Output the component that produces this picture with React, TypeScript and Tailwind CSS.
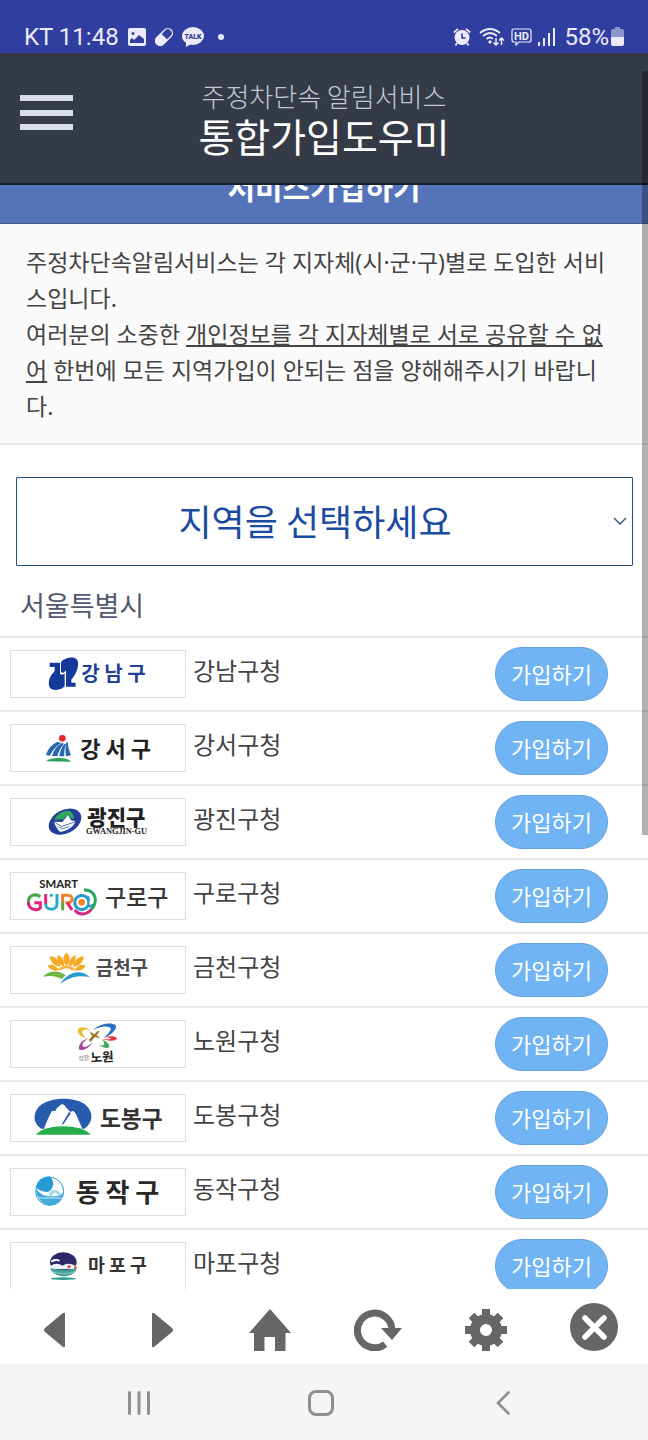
import type { ReactNode } from "react";

type District = { id: string; name: string; view: string; logo: ReactNode };

const districts: District[] = [
  {
    id: "gangnam",
    name: "강남구청",
    view: "33 33 522 138",
    logo: (
      <>
        <g transform="translate(60 15)" fill="#14399a">
          <path d="M89 53H120V86C124 91 131 89 134 85V124C125 134 108 138 94 132C83 125 85 103 94 90L104 78V66H89Z" />
          <path d="M123 51C134 38 160 33 170 43C180 56 172 84 154 104V113H167V125H138V76L131 83L123 82Z" />
        </g>
        <text x="244" y="124" fontSize="60" fontWeight="700" fill="#24419a">강 남 구</text>
      </>
    ),
  },
  {
    id: "gangseo",
    name: "강서구청",
    view: "33 255 522 138",
    logo: (
      <>
        <circle cx="187" cy="295" r="10" fill="#e8222c" />
        <path d="M172 306L184 308C168 318 156 332 150 347L138 345C143 328 155 313 172 306Z" fill="#2766b0" />
        <path d="M186 309L192 311C181 323 175 336 172 349L156 348C161 331 171 317 186 309Z" fill="#2766b0" />
        <path d="M194 311L198 312C193 325 192 337 193 349H178C180 334 184 321 194 311Z" fill="#2766b0" />
        <path d="M199 307L203 306C204 320 208 334 213 346L198 349C195 335 196 321 199 307Z" fill="#2766b0" />
        <path d="M138 364C152 352 199 350 213 365Z" fill="#25a45a" />
        <text x="241" y="351" fontSize="66" fontWeight="700" fill="#222">강 서 구</text>
      </>
    ),
  },
  {
    id: "gwangjin",
    name: "광진구청",
    view: "33 479 522 138",
    logo: (
      <>
        <ellipse cx="195" cy="547" rx="52" ry="35" transform="rotate(-28 195 547)" fill="#233f99" />
        <path d="M163 541C172 522 188 515 206 514C216 517 222 526 222 540L212 536L204 524L190 540Z" fill="#31a957" />
        <path d="M162 547L187 548L204 526L213 543L227 546L186 560Z" fill="#fff" />
        <path d="M162 549L186 562L226 548C219 564 202 575 180 578C172 570 165 559 162 549Z" fill="#eef7f5" />
        <path d="M176 563L188 568L208 562" fill="none" stroke="#233f99" strokeWidth="2" />
        <text x="262" y="556" fontSize="63" fontWeight="900" fill="#222">광진구</text>
        <text x="258" y="583" fontSize="25" fontWeight="700" fill="#222" className="font-['Liberation_Serif',serif]">GWANGJIN-GU</text>
      </>
    ),
  },
  {
    id: "guro",
    name: "구로구청",
    view: "33 40 522 138",
    logo: (
      <>
        <text x="118" y="86" fontSize="34" fontWeight="700" fill="#222" className="font-[Lato,sans-serif]">SMART</text>
        <g fill="none" strokeWidth="9">
          <path d="M121 111C106 100 85 107 85 127" stroke="#48a646" />
          <path d="M85 126C85 151 111 155 121 145V129H103" stroke="#df2277" />
          <path d="M137 103V134" stroke="#e4267c" />
          <path d="M137 132C137 154 171 154 171 132V103" stroke="#2babc8" />
          <path d="M188 128V107H203C221 107 221 129 203 129H196" stroke="#ed8128" />
          <path d="M202 129L216 151" stroke="#df2277" />
          <path d="M188 126V152" stroke="#5ba947" />
          <path d="M265 136A21 21 0 1 1 266 124" stroke="#2999d2" />
          <path d="M265 110V132C265 142 276 143 278 133" stroke="#2999d2" strokeWidth="7" />
          <path d="M252 91C279 89 292 113 283 136C280 143 277 148 271 152" stroke="#2ba45c" />
          <path d="M273 150C260 167 237 167 224 151" stroke="#d62785" />
        </g>
        <circle cx="245" cy="128" r="10" fill="#ef851f" />
        <circle cx="154" cy="107" r="5" fill="#2babc8" />
        <text x="315" y="140" fontSize="69" fontWeight="500" fill="#373737">구로구</text>
      </>
    ),
  },
  {
    id: "geumcheon",
    name: "금천구청",
    view: "33 264 522 138",
    logo: (
      <>
        <g fill="#f6a823">
          <path d="M143 319C154 314 171 319 176 334C158 337 147 330 143 319Z" />
          <path d="M149 292C168 292 180 307 181 323C163 323 151 309 149 292Z" />
          <path d="M173 288C186 292 195 308 192 323C178 317 169 304 173 288Z" />
          <path d="M199 281C212 291 213 308 200 322C187 308 187 292 199 281Z" />
          <path d="M226 288C230 304 222 317 208 323C205 308 213 294 226 288Z" />
          <path d="M251 292C250 311 236 323 219 323C221 306 233 293 251 292Z" />
          <path d="M257 319C253 332 241 337 224 334C229 320 244 314 257 319Z" />
        </g>
        <path d="M174 332C184 317 216 316 226 333L215 334C205 326 194 326 184 334Z" fill="#f9b13a" />
        <path d="M129 354C145 333 180 333 197 349L185 360C168 350 149 349 129 354Z" fill="#73b641" />
        <path d="M180 376C198 343 240 325 270 355C240 348 208 353 180 376Z" fill="#2b99ce" />
        <text x="287" y="347" fontSize="57" fontWeight="700" fill="#4b4b50">금천구</text>
      </>
    ),
  },
  {
    id: "nowon",
    name: "노원구청",
    view: "33 486 522 138",
    logo: (
      <>
        <path d="M279 513C294 496 332 487 347 498C352 511 336 527 312 536C331 518 339 508 326 504C312 500 297 504 279 513Z" fill="#2773bb" />
        <path d="M273 514C256 502 238 503 234 512C231 524 243 533 259 537C246 526 243 517 250 513C257 510 266 511 273 514Z" fill="#f1b82b" />
        <path d="M265 538C242 545 232 563 239 573C251 575 267 566 278 551C260 563 251 567 248 561C245 555 254 546 265 538Z" fill="#a6429b" />
        <path d="M290 553C306 564 321 571 327 565C330 556 321 548 305 541C313 550 316 555 309 559C304 561 297 557 290 553Z" fill="#42aa5b" />
        <path d="M311 535C327 530 345 530 351 537C349 547 330 548 305 539C324 543 337 540 330 537C325 534 318 535 311 535Z" fill="#e7363b" />
        <path d="M269 517L283 526L293 516L299 517L290 529L302 538L285 534L272 548L266 543L276 532Z" fill="#a17730" />
        <text x="236" y="606" fontSize="18" fill="#666" transform="rotate(-8 236 606)">강한</text>
        <text x="272" y="610" fontSize="38" fontWeight="700" fill="#222" transform="rotate(-3 272 610)">노원</text>
      </>
    ),
  },
  {
    id: "dobong",
    name: "도봉구청",
    view: "33 46 522 138",
    logo: (
      <>
        <path d="M124 147C98 133 98 100 118 80C147 51 229 49 258 77C281 99 280 129 253 147Z" fill="#285bac" />
        <path d="M132 147C138 131 146 112 154 97C158 90 163 96 166 94C170 84 176 82 181 77C186 70 194 75 199 84L212 98C218 90 223 96 228 104L247 147Z" fill="#fff" />
        <path d="M207 97L184 136L191 132L213 100Z" fill="#285bac" />
        <path d="M108 165C132 132 244 130 272 165Z" fill="#25ad4b" />
        <text x="300" y="143" fontSize="68" fontWeight="700" fill="#333">도봉구</text>
      </>
    ),
  },
  {
    id: "dongjak",
    name: "동작구청",
    view: "33 270 522 138",
    logo: (
      <>
        <circle cx="149" cy="337" r="42" fill="#fff" stroke="#279bd4" strokeWidth="3" />
        <path d="M108 326C111 304 128 293 149 292C165 308 163 328 144 339C130 339 118 334 108 326Z" fill="#279bd4" />
        <path d="M107 328C120 345 133 352 151 352C173 353 184 348 191 340C186 394 112 394 107 328Z" fill="#42aadb" />
        <path d="M146 350C149 329 175 325 184 348L175 350C168 337 158 339 155 351Z" fill="#a8d9eb" />
        <path d="M112 357H186" stroke="#c5e6f3" strokeWidth="3" />
        <text x="227" y="370" fontSize="78" fontWeight="700" fill="#282828">동 작 구</text>
      </>
    ),
  },
  {
    id: "mapo",
    name: "마포구청",
    view: "33 492 522 138",
    logo: (
      <>
        <ellipse cx="190" cy="550" rx="40" ry="30" fill="#2d2869" />
        <path d="M151 562C164 550 177 554 188 560C202 549 218 555 229 562V570H151Z" fill="#e9f2f5" />
        <path d="M151 567C168 573 212 574 230 567C226 600 158 600 151 567Z" fill="#459f99" />
        <path d="M154 577C175 586 207 586 227 577" fill="none" stroke="#8bcac1" strokeWidth="3" />
        <path d="M153 546C160 549 166 536 178 546" fill="none" stroke="#fff" strokeWidth="5" />
        <circle cx="162" cy="544" r="4" fill="#fff" />
        <circle cx="207" cy="563" r="5" fill="#ed4546" />
        <circle cx="226" cy="566" r="4" fill="#ed4546" />
        <ellipse cx="190" cy="599" rx="38" ry="4" fill="#2b9c91" />
        <text x="264" y="580" fontSize="55" fontWeight="700" fill="#333">마 포 구</text>
      </>
    ),
  },
];

function StatusBar() {
  return (
    <div className="flex h-[53px] shrink-0 items-center bg-[#303e9f] pt-5 pr-6 pl-6 font-[Roboto,sans-serif] text-[24px] leading-8 text-[#ebebfb]">
      <span>KT 11:48</span>
      <svg className="ml-[9px] size-[18px]" viewBox="0 0 18 18" aria-hidden="true">
        <path
          fillRule="evenodd"
          fill="currentColor"
          d="M2 0H16Q18 0 18 2V16Q18 18 16 18H2Q0 18 0 16V2Q0 0 2 0ZM2 14V15H16V11L11 7L6 12L4 10L2 12ZM5 4A1.5 1.5 0 1 0 5 7A1.5 1.5 0 1 0 5 4Z"
        />
      </svg>
      <svg className="ml-2 h-5 w-5" viewBox="0 0 20 20" aria-hidden="true">
        <g transform="rotate(45 10 10)">
          <rect x="5.5" y="0" width="9" height="20" rx="4.5" fill="none" stroke="currentColor" strokeWidth="1.4" />
          <path d="M5.5 10H14.500V15.500A4.500 4.500 0 0 1 5.500 15.500Z" fill="currentColor" stroke="currentColor" />
        </g>
      </svg>
      <svg className="ml-2 h-5 w-[22px]" viewBox="0 0 22 20" aria-hidden="true">
        <ellipse cx="11" cy="9" rx="11" ry="9" fill="currentColor" />
        <path d="M4 14V20L11 16Z" fill="currentColor" />
        <text x="11" y="11.500" textAnchor="middle" fontSize="7" fontWeight="900" fill="#303e9f">TALK</text>
      </svg>
      <span className="ml-[14px] size-[6px] rounded-full bg-current" />
      <span className="flex-1" />
      <svg className="h-[18px] w-[18px]" viewBox="0 0 18 18" fill="none" stroke="currentColor" aria-hidden="true">
        <circle cx="9" cy="9.500" r="7.500" fill="currentColor" stroke="none" />
        <path d="M.8 4.500L5 .9M17.200 4.500L13 .9M4 15L2.500 17.500M14 15L15.500 17.500" strokeWidth="1.800" />
        <path d="M9 5.500V10H12.500" stroke="#303e9f" strokeWidth="1.600" />
      </svg>
      <svg className="ml-2 h-5 w-[26px]" viewBox="0 0 26 20" fill="none" stroke="currentColor" strokeWidth="1.700" aria-hidden="true">
        <path d="M1 6Q11 -2 21 6M4 9Q11 3 18 9M7.500 12Q11 9 14 12" />
        <path d="M11 13L13 15L11 17L9 15Z" fill="currentColor" stroke="none" />
        <path d="M17 11V18M14.500 15.500L17 18L19.500 15.500M22.500 18V11M20 13.500L22.500 11L25 13.500" strokeWidth="1.500" />
      </svg>
      <svg className="ml-[6px] h-[18px] w-[21px]" viewBox="0 0 21 18" aria-hidden="true">
        <path d="M3 1H18Q20 1 20 3V12Q20 14 18 14H8L5 17V14H3Q1 14 1 12V3Q1 1 3 1Z" fill="none" stroke="currentColor" strokeWidth="1.200" />
        <text x="10.500" y="11.500" textAnchor="middle" fontSize="11" fontWeight="700" fill="currentColor">HD</text>
      </svg>
      <svg className="ml-[6px] h-[18px] w-[17px]" viewBox="0 0 17 18" fill="currentColor" aria-hidden="true">
        <path d="M0 14H2V18H0ZM5 10H7V18H5ZM10 5H12V18H10ZM15 0H17V18H15Z" />
      </svg>
      <span className="ml-[9px]">58%</span>
      <svg className="ml-[2px] h-[19px] w-[13px]" viewBox="0 0 13 19" fill="currentColor" aria-hidden="true">
        <path d="M4 0H9V2H11Q13 2 13 4V10H0V4Q0 2 2 2H4Z" opacity=".5" />
        <path d="M0 10H13V17Q13 19 11 19H2Q0 19 0 17Z" />
      </svg>
    </div>
  );
}

function Toolbar() {
  const button = "flex h-full w-full items-center justify-center text-[#666]";
  return (
    <nav aria-label="브라우저 도구" className="grid h-[75px] shrink-0 grid-cols-6 bg-white pt-[6px]">
      <button aria-label="이전" className={button}>
        <svg className="h-9 w-[21px]" viewBox="0 0 21 36" fill="currentColor"><path d="M21 2V34Q21 36 19 35L1 20Q-1 18 1 16L19 1Q21 0 21 2Z" /></svg>
      </button>
      <button aria-label="다음" className={button}>
        <svg className="h-9 w-[21px]" viewBox="0 0 21 36" fill="currentColor"><path d="M0 2V34Q0 36 2 35L20 20Q22 18 20 16L2 1Q0 0 0 2Z" /></svg>
      </button>
      <button aria-label="홈" className={button}>
        <svg className="h-[42px] w-[42px]" viewBox="0 0 42 42" fill="currentColor"><path d="M21 0L42 24H36.500V42H26V28H15.500V42H5V24H0Z" /></svg>
      </button>
      <button aria-label="새로고침" className={button}>
        <svg className="h-[42px] w-12" viewBox="0 0 48 42">
          <path d="M31.200 35.200A17.300 17.300 0 1 1 38 21" fill="none" stroke="currentColor" strokeWidth="7" />
          <path d="M27 19H48L38 31Z" fill="currentColor" />
        </svg>
      </button>
      <button aria-label="설정" className={button}>
        <svg className="h-[42px] w-[42px]" viewBox="0 0 42 42">
          <circle cx="21" cy="21" r="11" fill="none" stroke="currentColor" strokeWidth="10" />
          <g stroke="currentColor" strokeWidth="8">
            <path d="M21 0V9M21 33V42M0 21H9M33 21H42M6.500 6.500L13 13M29 29L35.500 35.500M35.500 6.500L29 13M13 29L6.500 35.500" />
          </g>
        </svg>
      </button>
      <button aria-label="닫기" className={button}>
        <svg className="mb-[6px] h-12 w-12" viewBox="0 0 48 48">
          <circle cx="24" cy="24" r="24" fill="currentColor" />
          <path d="M15 15L34 34M34 15L15 34" stroke="#fff" strokeWidth="5.500" strokeLinecap="round" />
        </svg>
      </button>
    </nav>
  );
}

function SystemNavigation() {
  const button = "flex h-full w-full items-center justify-center text-[#8f8f8f]";
  return (
    <nav aria-label="시스템 탐색" className="grid h-[76px] shrink-0 grid-cols-3 bg-[#f5f5f5] pt-[2px] pr-[54px] pl-12">
      <button aria-label="최근 앱" className={button}>
        <svg className="h-6 w-6" viewBox="0 0 24 24" stroke="currentColor" strokeWidth="3" strokeLinecap="round"><path d="M2.500 1.500V22.500M12 1.500V22.500M21.500 1.500V22.500" /></svg>
      </button>
      <button aria-label="홈 화면" className={button}>
        <svg className="h-[26px] w-[26px]" viewBox="0 0 26 26"><rect x="1.500" y="1.500" width="23" height="23" rx="6.500" fill="none" stroke="currentColor" strokeWidth="3" /></svg>
      </button>
      <button aria-label="뒤로" className={button}>
        <svg className="h-6 w-[14px]" viewBox="0 0 14 24"><path d="M12.500 1.500L2 12L12.500 22.500" fill="none" stroke="currentColor" strokeWidth="2.600" strokeLinecap="round" /></svg>
      </button>
    </nav>
  );
}

export default function App() {
  return (
    <div className="relative flex h-screen flex-col overflow-hidden bg-white font-['Noto_Sans_CJK_KR',sans-serif] text-[#444]">
      <StatusBar />
      <header className="grid h-[132px] shrink-0 grid-cols-[53px_1fr_53px] items-center border-b-2 border-[#171c27] bg-[#343a46] px-5">
        <button aria-label="메뉴" className="mt-[42px] flex h-[35px] w-[53px] flex-col justify-between self-start">
          <span className="h-[6px] w-full bg-[#d8dce8]" />
          <span className="h-[6px] w-full bg-[#d8dce8]" />
          <span className="h-[6px] w-full bg-[#d8dce8]" />
        </button>
        <div className="pt-[2px] text-center">
          <p className="text-[26px] leading-8 font-light text-[#c3c7d4]">주정차단속 알림서비스</p>
          <h1 className="text-[39px] leading-[46px] text-white">통합가입도우미</h1>
        </div>
      </header>

      <main className="min-h-0 flex-1 overflow-hidden">
        <div className="flex h-[39px] items-end justify-center overflow-hidden border-b border-[#4a5b85] bg-[#5473b8] pb-[17px]">
          <h2 className="text-[30px] leading-10 font-bold text-white">서비스가입하기</h2>
        </div>
        <section className="border-b-2 border-[#e6e9e9] bg-[#fafafa] pt-5 pr-8 pb-[19px] pl-[26px] font-['Noto_Sans','Noto_Sans_CJK_KR',sans-serif] text-[23px] leading-9">
          <p>주정차단속알림서비스는 각 지자체(시·군·구)별로 도입한 서비스입니다.</p>
          <p>
            여러분의 소중한 <u className="underline-offset-2">개인정보를 각 지자체별로 서로 공유할 수 없어</u> 한번에 모든 지역가입이 안되는 점을 양해해주시기 바랍니다.
          </p>
        </section>
        <div className="relative mt-8 mr-[15px] ml-4">
          <select
            aria-label="지역 선택"
            className="block h-[89px] w-full appearance-none rounded-[1px] border border-[#245087] bg-white pr-[19px] pb-1 text-center text-[36px] text-[#1b4ba0]"
          >
            <option>지역을 선택하세요</option>
            <option>서울특별시</option>
          </select>
          <svg className="pointer-events-none absolute top-10 right-[6px] h-2 w-[14px]" viewBox="0 0 14 8" fill="none" stroke="#245087" strokeWidth="1.300" aria-hidden="true">
            <path d="M1 1L7 7L13 1" />
          </svg>
        </div>
        <h3 className="px-5 pt-[19px] pb-[11px] text-[27px] leading-10 text-[#525870]">서울특별시</h3>
        <ul>
          {districts.map((d) => (
            <li key={d.id} className="flex h-[74px] items-center border-t-2 border-[#e3e9ec] pr-10 pl-[10px]">
              <div className="h-12 w-44 shrink-0 border border-[#ddd]">
                <svg className="h-full w-full" viewBox={d.view} role="img" aria-label={d.name}>
                  {d.logo}
                </svg>
              </div>
              <span className="ml-[7px] flex-1 pb-2 text-[24px] leading-8">{d.name}</span>
              <button className="h-[54px] w-[113px] rounded-full border border-[#62a3dc] bg-[#70b4f3] pb-[2px] text-[22px] text-white">
                가입하기
              </button>
            </li>
          ))}
        </ul>
      </main>

      <div aria-hidden="true" className="pointer-events-none absolute top-[71px] right-0 h-[764px] w-[6px] bg-black/30" />
      <Toolbar />
      <SystemNavigation />
    </div>
  );
}
